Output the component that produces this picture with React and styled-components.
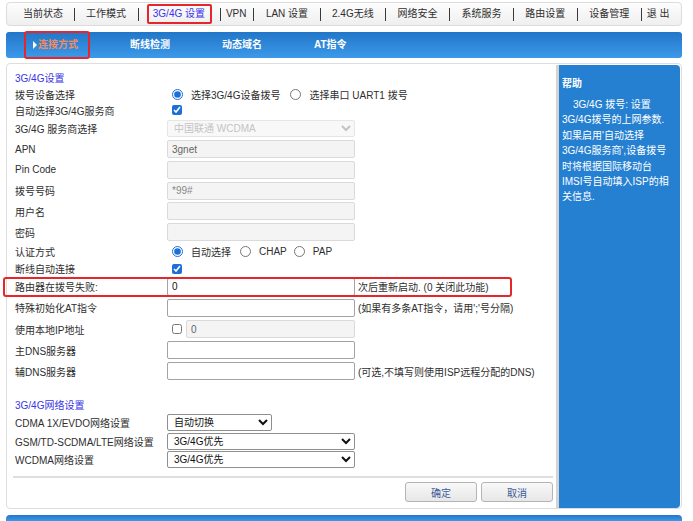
import React from 'react'
import styled, { createGlobalStyle } from 'styled-components'

const GlobalStyle = createGlobalStyle`
  html, body {
    margin: 0;
    padding: 0;
    background: #fff;
    overflow: hidden;
  }
  body {
    font-family: "Liberation Sans", Arial, "Noto Sans CJK SC", sans-serif;
    font-size: 10px;
    color: #2e2e2e;
  }
`

const Page = styled.div`
  width: 676px;
  padding: 2px 0 0 6px;
`

/* top menu */
const TopNav = styled.div`
  display: flex;
  align-items: center;
  height: 24px;
  box-sizing: border-box;
  padding-left: 16px;
  border: 1px solid #dcdcdc;
  border-radius: 4px;
  background: linear-gradient(#fdfdfd, #efefef);
`

const NavItem = styled.a`
  padding: 0 ${p => p.$pr ?? 11.5}px 0 ${p => p.$pl ?? 11.5}px;
  color: #2e2e2e;
  white-space: nowrap;
  line-height: 16px;
`

const NavActive = styled.a`
  margin: 0 8px;
  padding: 0 5px 0 4px;
  height: 20px;
  box-sizing: border-box;
  line-height: 16px;
  border: 2px solid #e5262b;
  border-radius: 2px;
  color: #3b32ee;
  white-space: nowrap;
`

const NavSep = styled.span`
  width: 1px;
  height: 13px;
  background: #3a3a3a;
`

/* second level tabs */
const SubNav = styled.div`
  display: flex;
  align-items: center;
  margin-top: 6px;
  height: 26px;
  padding-left: 18px;
  border-radius: 3px;
  background: linear-gradient(#2276c8, #3c99e9);
`

const Tab = styled.a`
  position: relative;
  width: 92px;
  padding-left: 14px;
  box-sizing: border-box;
  line-height: 26px;
  font-weight: bold;
  color: ${p => (p.$active ? '#f68a5b' : '#fff')};

  ${p =>
    p.$active &&
    `
    &::before {
      content: '';
      position: absolute;
      left: 9px;
      top: 9px;
      border-left: 4px solid #fff;
      border-top: 4px solid transparent;
      border-bottom: 4px solid transparent;
    }
    &::after {
      content: '';
      position: absolute;
      left: 0;
      top: -1px;
      width: 66px;
      height: 28px;
      box-sizing: border-box;
      border: 2px solid #e5262b;
      border-radius: 3px;
    }
  `}
`

/* main panel */
const Main = styled.div`
  display: flex;
  margin-top: 5px;
  height: 446px;
  box-sizing: border-box;
  border: 1px solid #dedede;
  border-radius: 4px;
  background: #fff;
`

const FormArea = styled.div`
  flex: 1;
  padding: 7px 3px 0 8px;
`

const SectionTitle = styled.div`
  height: ${p => p.$h}px;
  line-height: ${p => p.$h}px;
  margin-top: ${p => p.$mt || 0}px;
  color: #3a36e6;
`

const Row = styled.div`
  position: relative;
  display: flex;
  align-items: center;
  height: ${p => p.$h}px;
`

const Marked = styled.span`
  position: absolute;
  left: -12px;
  top: 0.5px;
  width: 509px;
  bottom: 0;
  box-sizing: border-box;
  border: 2px solid #e5262b;
  border-radius: 3px;
  pointer-events: none;
`

const Label = styled.div`
  width: 152px;
  flex-shrink: 0;
  white-space: nowrap;
`

const Field = styled.div`
  display: flex;
  align-items: center;
  white-space: nowrap;
`

const TextInput = styled.input`
  box-sizing: border-box;
  width: ${p => p.$w || 188}px;
  height: 18px;
  margin: 0;
  padding: 0 4px;
  font-family: inherit;
  font-size: 10px;
  border: 1px solid ${p => (p.disabled ? '#dadada' : '#a3a3a3')};
  border-radius: 2px;
  background: ${p => (p.disabled ? '#f4f4f4' : '#fff')};
  color: ${p => (p.disabled ? '#666' : '#111')};
`

const Select = styled.select`
  box-sizing: border-box;
  width: ${p => p.$w || 188}px;
  height: 17px;
  margin: 0;
  padding: 0 2px;
  font-family: inherit;
  font-size: 10px;
  border: 1px solid ${p => (p.disabled ? '#dcdcdc' : '#8f8f8f')};
  border-radius: 2px;
  background: ${p => (p.disabled ? '#f6f6f6' : '#fff')};
  color: ${p => (p.disabled ? '#aaa' : '#111')};
`

const Radio = styled.input.attrs({ type: 'radio' })`
  width: 11px;
  height: 11px;
  margin: 0 8px 0 ${p => p.$ml ?? 9}px;
  accent-color: #1b6fd6;
`

const Check = styled.input.attrs({ type: 'checkbox' })`
  width: 10px;
  height: 10px;
  margin: 0 0 0 5px;
  accent-color: #1b6fd6;
`

const Note = styled.span`
  margin-left: 3px;
`

const Divider = styled.div`
  margin: 7px 0 0 -2px;
  height: 2px;
  background: #dedede;
`

const Buttons = styled.div`
  display: flex;
  justify-content: flex-end;
  gap: 4px;
  margin-top: 4px;
`

const Button = styled.button`
  width: 72px;
  height: 20px;
  padding: 0;
  font-family: inherit;
  font-size: 10px;
  color: #3b5b98;
  border: 1px solid #b4b4b4;
  border-radius: 3px;
  background: linear-gradient(#f8f8f8, #e7e7e7);
`

/* help side panel */
const Help = styled.div`
  width: 124px;
  margin: 1px 1px 0 0;
  padding: 11px 4px 0 3px;
  box-sizing: border-box;
  border-left: 3px solid #d3d3d3;
  border-radius: 0 4px 4px 0;
  background: #2680d1;
  color: #fff;
`

const HelpTitle = styled.div`
  line-height: 15px;
  font-weight: bold;
`

const HelpText = styled.p`
  margin: 6px 0 0;
  line-height: 15.4px;
  white-space: nowrap;
  text-indent: 11px;
`

const BottomBar = styled.div`
  margin-top: 6px;
  height: 6px;
  border-radius: 4px 4px 0 0;
  background: linear-gradient(#2276c8, #3c99e9);
`

const menu = [
  { t: '当前状态', pl: 0, pr: 11 },
  { t: '工作模式', pl: 11, pr: 12 },
  { t: '3G/4G 设置', active: true },
  { t: 'VPN', pl: 5, pr: 7 },
  { t: 'LAN 设置' },
  { t: '2.4G无线' },
  { t: '网络安全' },
  { t: '系统服务' },
  { t: '路由设置' },
  { t: '设备管理' },
  { t: '退 出', pl: 5 },
]

const tabs = ['连接方式', '断线检测', '动态域名', 'AT指令']

function App() {
  return (
    <Page>
      <GlobalStyle />

      <TopNav>
        {menu.map((m, i) => (
          <React.Fragment key={m.t}>
            {i > 0 && <NavSep />}
            {m.active ? (
              <NavActive>{m.t}</NavActive>
            ) : (
              <NavItem $pl={m.pl} $pr={m.pr}>{m.t}</NavItem>
            )}
          </React.Fragment>
        ))}
      </TopNav>

      <SubNav>
        {tabs.map((t, i) => (
          <Tab key={t} $active={i === 0}>{t}</Tab>
        ))}
      </SubNav>

      <Main>
        <FormArea>
          <SectionTitle $h={15}>3G/4G设置</SectionTitle>

          <Row $h={16}>
            <Label>拨号设备选择</Label>
            <Field>
              <Radio name="dev" defaultChecked $ml={5} />选择3G/4G设备拨号
              <Radio name="dev" $ml={10} />选择串口 UART1 拨号
            </Field>
          </Row>
          <Row $h={16}>
            <Label>自动选择3G/4G服务商</Label>
            <Field><Check defaultChecked /></Field>
          </Row>
          <Row $h={20.75}>
            <Label>3G/4G 服务商选择</Label>
            <Field>
              <Select disabled defaultValue="wcdma">
                <option value="wcdma">中国联通 WCDMA</option>
              </Select>
            </Field>
          </Row>
          <Row $h={20.75}>
            <Label>APN</Label>
            <Field><TextInput disabled defaultValue="3gnet" /></Field>
          </Row>
          <Row $h={20.75}>
            <Label>Pin Code</Label>
            <Field><TextInput disabled /></Field>
          </Row>
          <Row $h={20.75}>
            <Label>拨号号码</Label>
            <Field><TextInput disabled defaultValue="*99#" style={{ color: '#888' }} /></Field>
          </Row>
          <Row $h={20.75}>
            <Label>用户名</Label>
            <Field><TextInput disabled /></Field>
          </Row>
          <Row $h={20.75}>
            <Label>密码</Label>
            <Field><TextInput disabled type="password" /></Field>
          </Row>
          <Row $h={18}>
            <Label>认证方式</Label>
            <Field>
              <Radio name="auth" defaultChecked $ml={5} />自动选择
              <Radio name="auth" $ml={9} />CHAP
              <Radio name="auth" $ml={7} />PAP
            </Field>
          </Row>
          <Row $h={16}>
            <Label>断线自动连接</Label>
            <Field><Check defaultChecked /></Field>
          </Row>
          <Row $h={20.75}>
            <Marked />
            <Label>路由器在拨号失败:</Label>
            <Field>
              <TextInput defaultValue="0" />
              <Note>次后重新启动. (0 关闭此功能)</Note>
            </Field>
          </Row>
          <Row $h={20.75}>
            <Label>特殊初始化AT指令</Label>
            <Field>
              <TextInput />
              <Note>(如果有多条AT指令，请用';'号分隔)</Note>
            </Field>
          </Row>
          <Row $h={22}>
            <Label>使用本地IP地址</Label>
            <Field>
              <Check style={{ marginRight: 4 }} />
              <TextInput disabled defaultValue="0" $w={169} />
            </Field>
          </Row>
          <Row $h={20.75}>
            <Label>主DNS服务器</Label>
            <Field><TextInput /></Field>
          </Row>
          <Row $h={20.75}>
            <Label>辅DNS服务器</Label>
            <Field>
              <TextInput />
              <Note>(可选,不填写则使用ISP远程分配的DNS)</Note>
            </Field>
          </Row>

          <SectionTitle $h={16} $mt={16}>3G/4G网络设置</SectionTitle>
          <Row $h={18.5}>
            <Label>CDMA 1X/EVDO网络设置</Label>
            <Field>
              <Select $w={105} defaultValue="auto">
                <option value="auto">自动切换</option>
              </Select>
            </Field>
          </Row>
          <Row $h={18.5}>
            <Label>GSM/TD-SCDMA/LTE网络设置</Label>
            <Field>
              <Select defaultValue="pref">
                <option value="pref">3G/4G优先</option>
              </Select>
            </Field>
          </Row>
          <Row $h={18.5}>
            <Label>WCDMA网络设置</Label>
            <Field>
              <Select defaultValue="pref">
                <option value="pref">3G/4G优先</option>
              </Select>
            </Field>
          </Row>

          <Divider />
          <Buttons>
            <Button>确定</Button>
            <Button>取消</Button>
          </Buttons>
        </FormArea>

        <Help>
          <HelpTitle>帮助</HelpTitle>
          <HelpText>
            3G/4G 拨号: 设置<br />
            3G/4G拨号的上网参数.<br />
            如果启用'自动选择<br />
            3G/4G服务商',设备拨号<br />
            时将根据国际移动台<br />
            IMSI号自动填入ISP的相<br />
            关信息.
          </HelpText>
        </Help>
      </Main>

      <BottomBar />
    </Page>
  )
}

export default App
